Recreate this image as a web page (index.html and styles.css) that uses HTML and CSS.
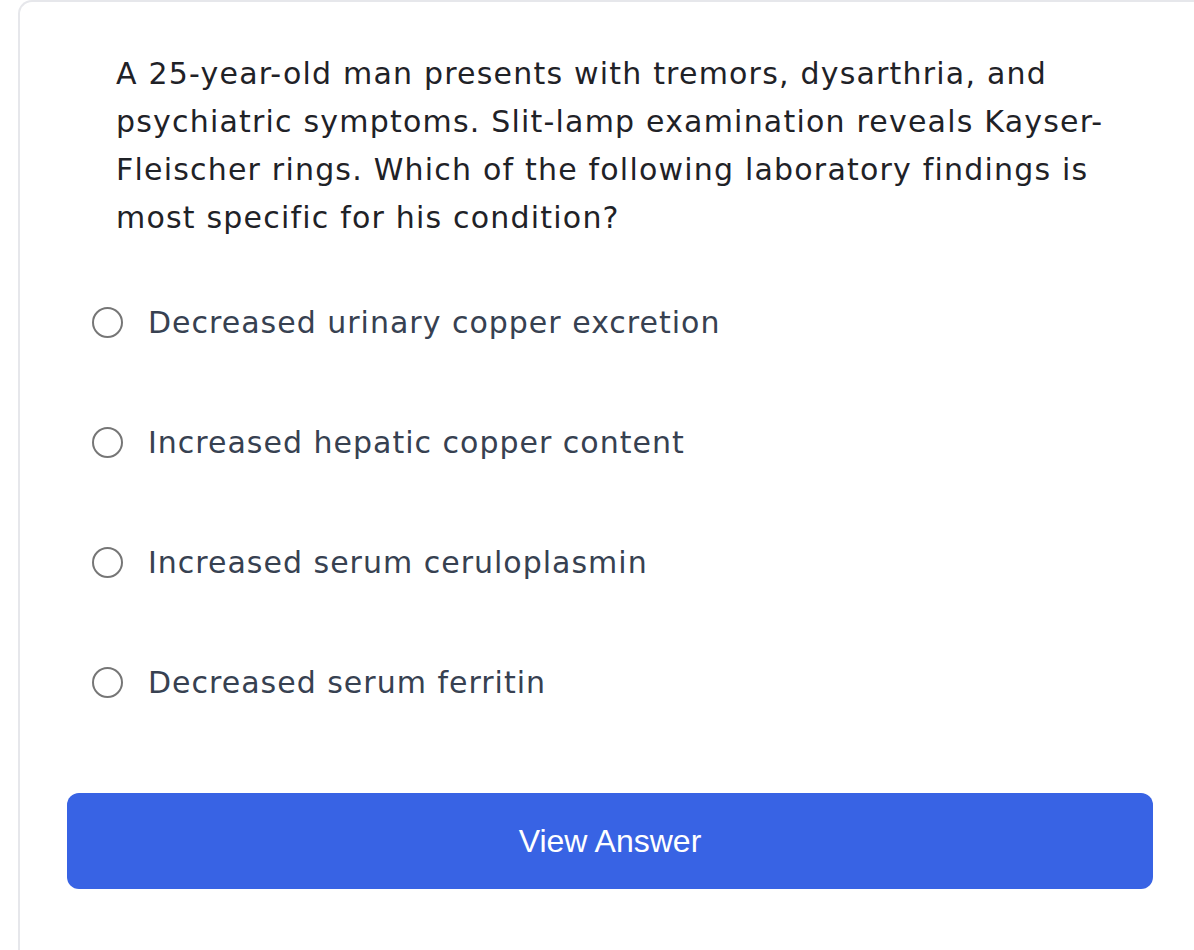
FILE: index.html
```html
<!DOCTYPE html>
<html>
<head>
<meta charset="utf-8">
<link rel="stylesheet" href="styles.css">
</head>
<body>
<div class="card">
  <p class="question">A 25-year-old man presents with tremors, dysarthria, and psychiatric symptoms. Slit-lamp examination reveals Kayser-Fleischer rings. Which of the following laboratory findings is most specific for his condition?</p>
  <div class="options">
    <label class="option"><span class="radio"></span><span class="label">Decreased urinary copper excretion</span></label>
    <label class="option"><span class="radio"></span><span class="label">Increased hepatic copper content</span></label>
    <label class="option"><span class="radio"></span><span class="label">Increased serum ceruloplasmin</span></label>
    <label class="option"><span class="radio"></span><span class="label">Decreased serum ferritin</span></label>
  </div>
  <button class="btn">View Answer</button>
</div>
</body>
</html>
```

FILE: styles.css
```css
html, body {
  margin: 0;
  padding: 0;
  overflow: hidden;
  background: #ffffff;
}
.card {
  box-sizing: border-box;
  margin-left: 18px;
  width: 1183px;
  min-height: 1000px;
  border: 2px solid #e6e7eb;
  border-right: none;
  border-bottom: none;
  border-top-left-radius: 14px;
  padding: 48px 48px 0 47px;
  font-family: "DejaVu Sans", Verdana, sans-serif;
}
.question {
  margin: 0;
  padding: 0 40px 0 49px;
  font-size: 30px;
  letter-spacing: 1.2px;
  line-height: 48px;
  color: #1f2227;
}
.options {
  margin-top: 56px;
  display: flex;
  flex-direction: column;
  gap: 72px;
}
.option {
  display: flex;
  align-items: center;
  gap: 25px;
  height: 48px;
  padding-left: 25px;
  font-size: 30px;
  letter-spacing: 1px;
  color: #374151;
}
.radio {
  box-sizing: border-box;
  width: 31px;
  height: 31px;
  border: 2px solid #767676;
  border-radius: 50%;
  flex: none;
}
.btn {
  display: block;
  width: 100%;
  margin-top: 87px;
  height: 96px;
  border: none;
  border-radius: 12px;
  background: #3863e4;
  color: #ffffff;
  font-family: "Liberation Sans", Arial, sans-serif;
  font-size: 32px;
  padding: 0;
}
```
